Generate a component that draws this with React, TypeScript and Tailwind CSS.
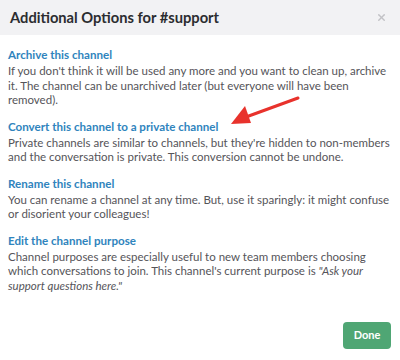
import { X } from "lucide-react";

const sections = [
  {
    title: "Archive this channel",
    body: (
      <>
        If you don't think it will be used any more and you want to clean up, archive it. The
        channel can be unarchived later (but everyone will have been removed).
      </>
    ),
  },
  {
    title: "Convert this channel to a private channel",
    body: (
      <>
        Private channels are similar to channels, but they're hidden to non-members and the
        conversation is private. This conversion cannot be undone.
      </>
    ),
  },
  {
    title: "Rename this channel",
    body: (
      <>
        You can rename a channel at any time. But, use it sparingly: it might confuse or disorient
        your colleagues!
      </>
    ),
  },
  {
    title: "Edit the channel purpose",
    body: (
      <>
        Channel purposes are especially useful to new team members choosing which conversations to
        join. This channel's current purpose is <em>"Ask your support questions here."</em>
      </>
    ),
  },
];

export default function App() {
  return (
    <div
      className="relative w-[400px] h-[360px] bg-white overflow-hidden"
      style={{ fontFamily: "Lato, 'Open Sans', sans-serif" }}
    >
      <div className="h-[35px] bg-[#f2f2f4] flex items-center justify-between pl-[10px] pr-[13px]">
        <h1 className="text-[14.7px] font-bold text-[#2c2d30]">Additional Options for #support</h1>
        <X className="h-[11px] w-[11px] text-[#c2c2c6]" strokeWidth={3} />
      </div>

      <div className="pl-[8px] pr-[10px] pt-[11px] flex flex-col gap-[10px]">
        {sections.map((s) => (
          <div key={s.title}>
            <div className="text-[11.6px] leading-[17px] font-bold text-[#2f84bd] mb-[1px]">
              {s.title}
            </div>
            <p className="text-[11.5px] leading-[14.5px] text-[#555459]">{s.body}</p>
          </div>
        ))}
      </div>

      <div className="absolute right-[9px] bottom-[11px]">
        <button className="h-[27px] w-[48px] rounded-[4px] bg-[#4fa674] text-white text-[11px] font-bold">
          Done
        </button>
      </div>

      <svg className="absolute left-0 top-0" width="400" height="360" viewBox="0 0 400 360">
        <line x1="298" y1="98" x2="246" y2="117" stroke="#e8322c" strokeWidth="3" strokeLinecap="round" />
        <polygon points="231,124 245,106 251,123" fill="#e8322c" />
      </svg>
    </div>
  );
}
